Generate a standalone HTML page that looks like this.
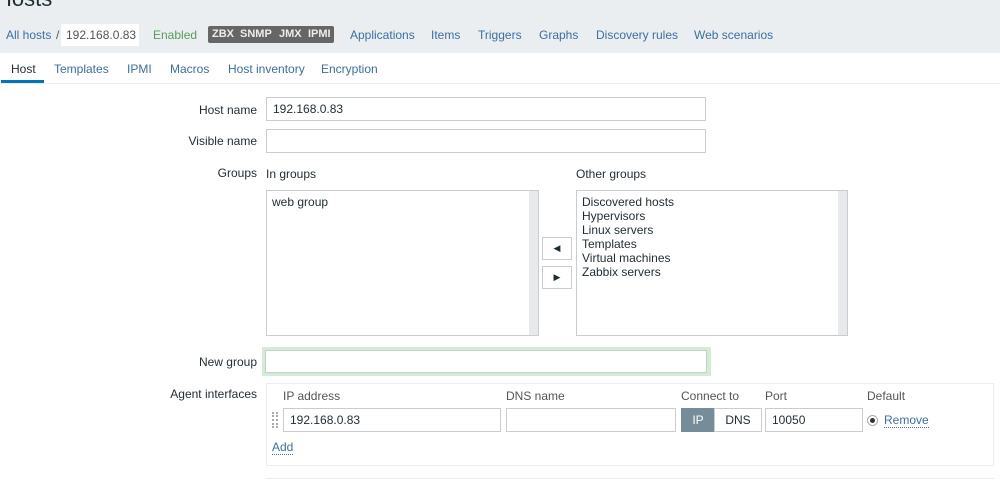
<!DOCTYPE html>
<html><head><meta charset="utf-8"><style>
*{box-sizing:border-box;margin:0;padding:0}
body{width:1000px;height:481px;overflow:hidden;background:#fff;font-family:"Liberation Sans",Arial,sans-serif;font-size:12px;color:#1f2c33;position:relative}
.a{position:absolute;white-space:nowrap}
.lnk{color:#3b6ea5}
.inp{position:absolute;border:1px solid #c9cdd0;background:#fff;height:24px;padding:4px 6px;font-size:12px;color:#1f2c33}
.lbl{position:absolute;text-align:right;width:250px;left:7px;color:#1f2c33}
.lb{position:absolute;border:1px solid #c9cdd0;background:#fff}
.lb .sb{position:absolute;right:0;top:0;bottom:0;width:9px;background:#e8e9ea}
.btn{position:absolute;border:1px solid #c9cdd0;background:#fff;width:30px;height:23px;font-size:9px;text-align:center;line-height:21px;color:#1f2c33}
.hd{color:#555}
.bd{position:absolute;top:28px;color:#eee;font-weight:bold;font-size:11px}
</style></head><body>
<div class="a" style="left:0;top:0;width:1000px;height:53px;background:#ebeef0"></div>
<div class="a" style="left:-4px;top:-14px;font-size:22px;color:#1f2c33">Hosts</div>
<div class="a lnk" style="left:6px;top:28px;font-size:12px">All hosts</div>
<div class="a" style="left:56px;top:28px;color:#555">/</div>
<div class="a" style="left:61px;top:24px;width:78px;height:22px;background:#fff;padding:4px 5px;color:#555">192.168.0.83</div>
<div class="a" style="left:153px;top:28px;color:#5a9a5c">Enabled</div>
<div class="a" style="left:208px;top:26px;width:126px;height:17px;background:#666;border-radius:2px"></div>
<div class="bd" style="left:212px">ZBX</div>
<div class="bd" style="left:240px">SNMP</div>
<div class="bd" style="left:279px">JMX</div>
<div class="bd" style="left:308px">IPMI</div>
<div class="a lnk" style="left:350px;top:28px">Applications</div>
<div class="a lnk" style="left:431px;top:28px">Items</div>
<div class="a lnk" style="left:478px;top:28px">Triggers</div>
<div class="a lnk" style="left:539px;top:28px">Graphs</div>
<div class="a lnk" style="left:596px;top:28px">Discovery rules</div>
<div class="a lnk" style="left:694px;top:28px">Web scenarios</div>
<div class="a" style="left:0;top:83px;width:1000px;height:1px;background:#ebeef0"></div>
<div class="a" style="left:11px;top:62px">Host</div>
<div class="a" style="left:1px;top:80px;width:43px;height:3px;background:#0275b8"></div>
<div class="a lnk" style="left:54px;top:62px">Templates</div>
<div class="a lnk" style="left:127px;top:62px">IPMI</div>
<div class="a lnk" style="left:170px;top:62px">Macros</div>
<div class="a lnk" style="left:228px;top:62px">Host inventory</div>
<div class="a lnk" style="left:321px;top:62px">Encryption</div>

<div class="lbl" style="top:103px">Host name</div>
<div class="inp" style="left:266px;top:97px;width:440px">192.168.0.83</div>
<div class="lbl" style="top:134px">Visible name</div>
<div class="inp" style="left:266px;top:129px;width:440px"></div>
<div class="lbl" style="top:166px">Groups</div>
<div class="a" style="left:266px;top:167px">In groups</div>
<div class="a" style="left:576px;top:167px">Other groups</div>
<div class="lb" style="left:266px;top:190px;width:273px;height:146px"><div class="sb"></div><div class="a" style="left:5px;top:4px">web group</div></div>
<div class="btn" style="left:542px;top:237px">&#9664;</div>
<div class="btn" style="left:542px;top:266px">&#9654;</div>
<div class="lb" style="left:576px;top:190px;width:272px;height:146px"><div class="sb"></div><div class="a" style="left:5px;top:4px;line-height:14px">Discovered hosts<br>Hypervisors<br>Linux servers<br>Templates<br>Virtual machines<br>Zabbix servers</div></div>
<div class="lbl" style="top:355px">New group</div>
<div class="a" style="left:262px;top:347px;width:449px;height:29px;background:#d4ebd5"></div>
<div class="inp" style="left:265px;top:350px;width:442px;height:23px"></div>
<div class="lbl" style="top:387px">Agent interfaces</div>
<div class="a" style="left:266px;top:383px;width:728px;height:83px;border:1px solid #ebeef0"></div>
<div class="a hd" style="left:283px;top:389px">IP address</div>
<div class="a hd" style="left:506px;top:389px">DNS name</div>
<div class="a hd" style="left:681px;top:389px">Connect to</div>
<div class="a hd" style="left:765px;top:389px">Port</div>
<div class="a hd" style="left:867px;top:389px">Default</div>
<div class="a" style="left:272px;top:412px;width:6px;height:16px;border-left:2px dotted #aaa;border-right:2px dotted #aaa"></div>
<div class="inp" style="left:283px;top:408px;width:218px;height:24px">192.168.0.83</div>
<div class="inp" style="left:506px;top:408px;width:170px;height:24px"></div>
<div class="a" style="left:681px;top:408px;width:34px;height:24px;background:#768d99;color:#fff;text-align:center;line-height:24px">IP</div>
<div class="a" style="left:714px;top:408px;width:48px;height:24px;border:1px solid #c9cdd0;text-align:center;line-height:22px">DNS</div>
<div class="inp" style="left:765px;top:408px;width:98px;height:24px">10050</div>
<div class="a" style="left:867px;top:415px;width:11px;height:11px;border:1px solid #aaa;border-radius:50%;background:#fff"></div>
<div class="a" style="left:870px;top:418px;width:5px;height:5px;border-radius:50%;background:#333"></div>
<div class="a lnk" style="left:884px;top:413px;border-bottom:1px dotted #3b6ea5">Remove</div>
<div class="a lnk" style="left:272px;top:440px;border-bottom:1px dotted #3b6ea5">Add</div>
<div class="a" style="left:266px;top:478px;width:728px;height:1px;background:#ebeef0"></div>
</body></html>
